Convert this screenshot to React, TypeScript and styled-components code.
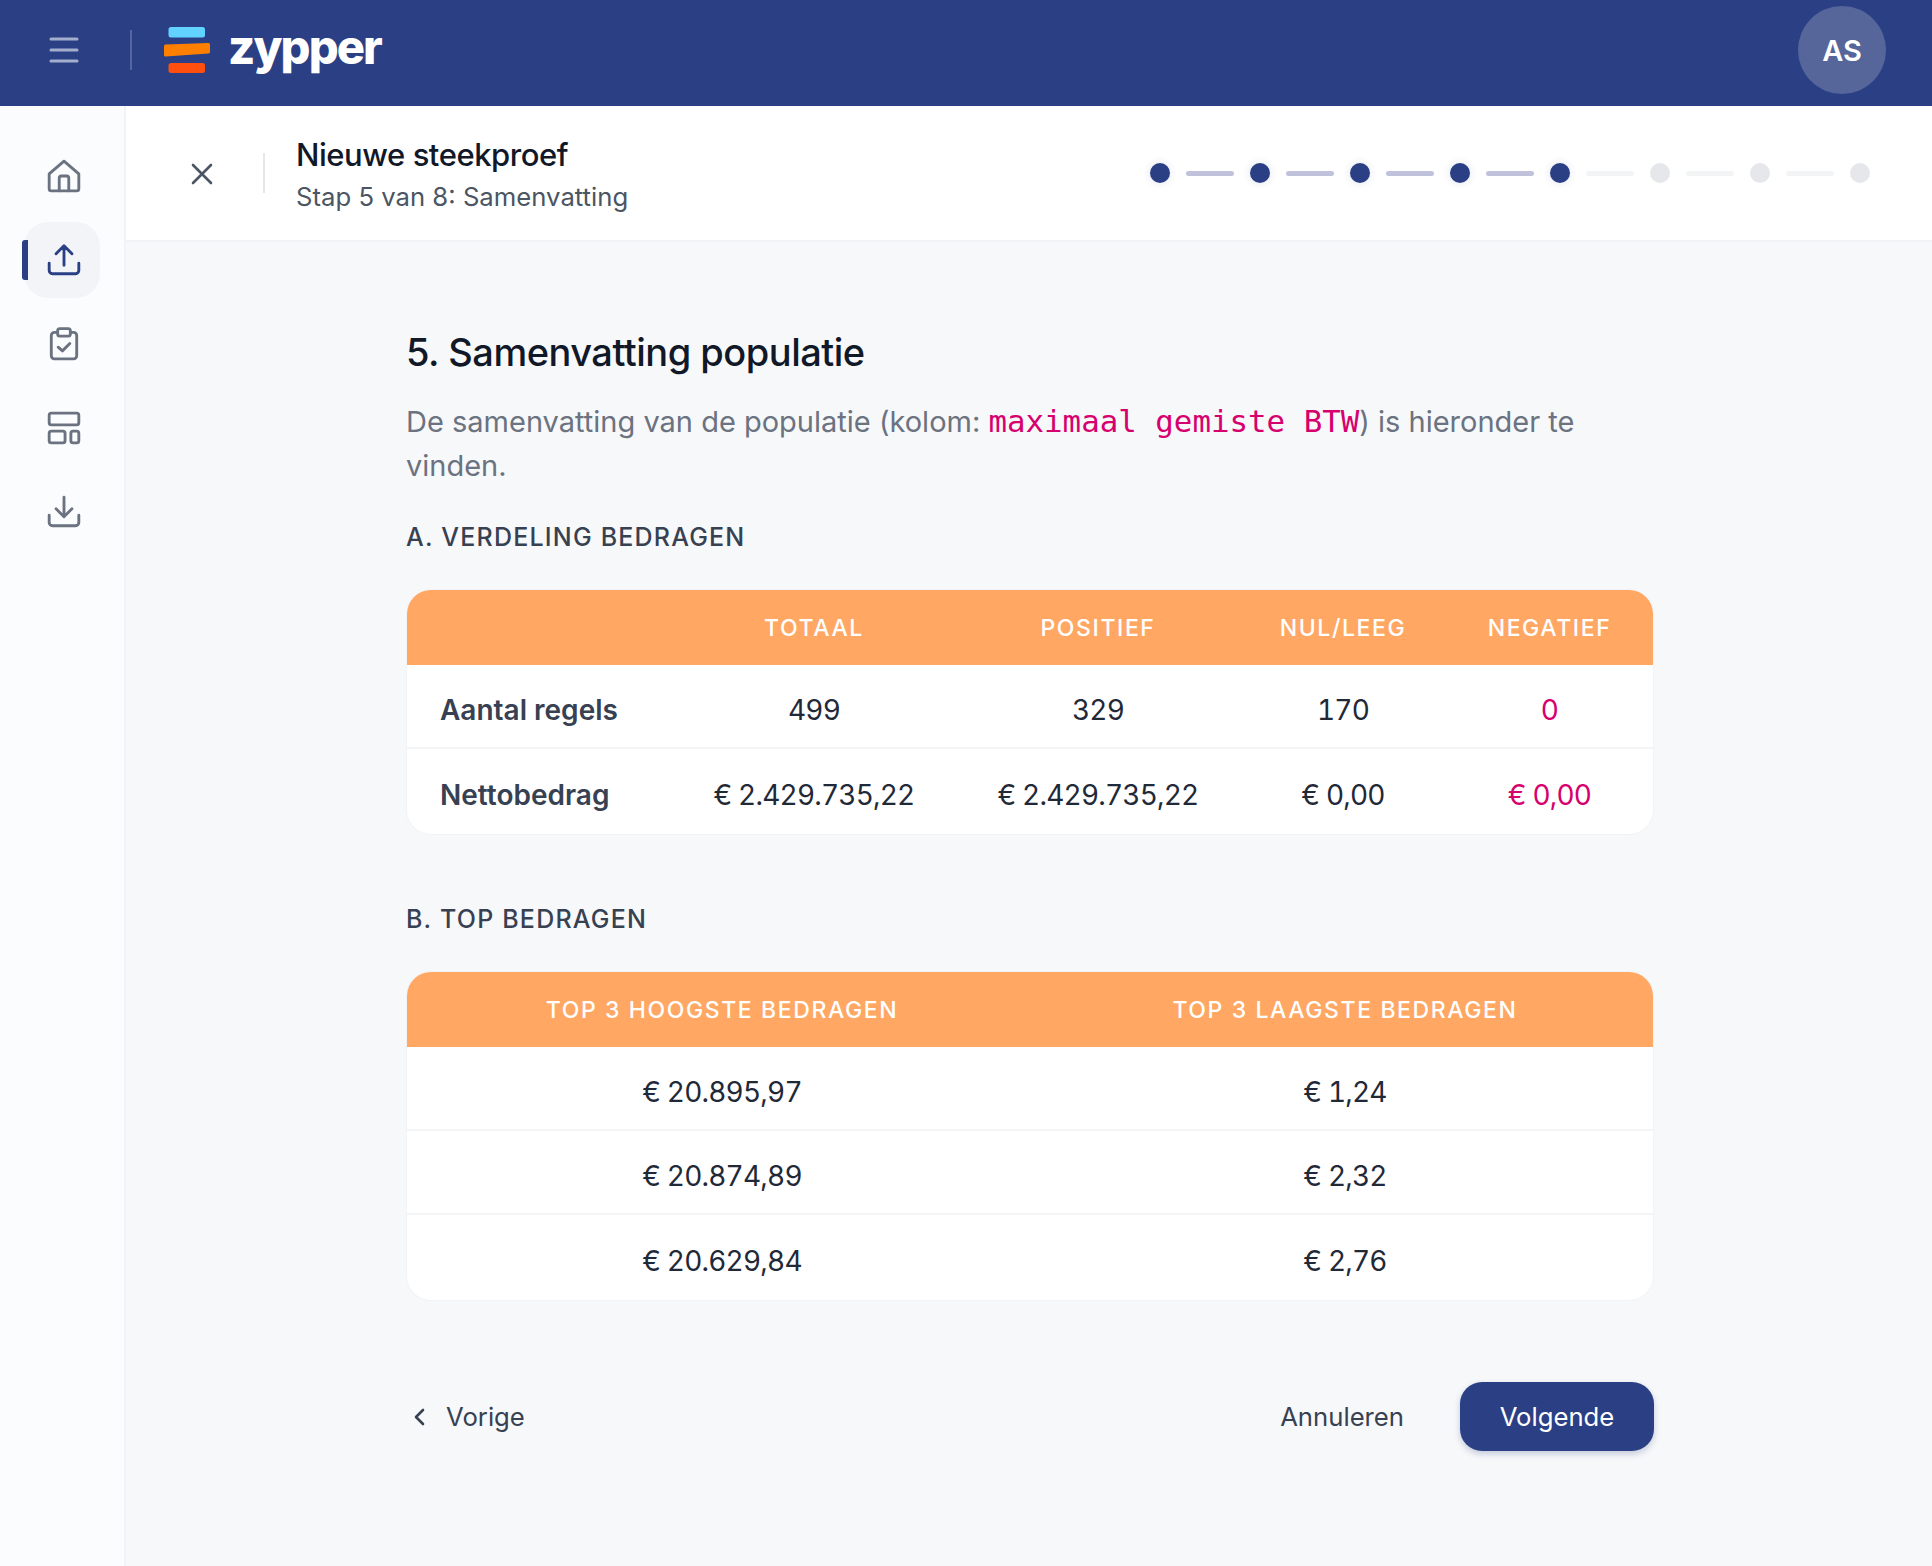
import React from 'react';
import styled, { createGlobalStyle } from 'styled-components';

const GlobalStyle = createGlobalStyle`
  html, body {
    margin: 0;
    padding: 0;
    height: 100%;
    background: #f7f8fa;
    font-family: Inter, "Noto Sans", sans-serif;
    color: #1f2937;
  }
  * { box-sizing: border-box; }
`;

const Page = styled.div`
  display: flex;
  flex-direction: column;
  height: 1566px;
  overflow: hidden;
`;

const Header = styled.header`
  flex: 0 0 106px;
  display: flex;
  align-items: center;
  background: #2b4084;
  padding: 0 46px 0 48px;
`;

const HeaderDivider = styled.div`
  width: 2px;
  height: 40px;
  margin: -6px 32px 0 50px;
  background: rgba(255, 255, 255, 0.2);
`;

const Menu = styled.div`
  display: flex;
  margin-top: -6px;
`;

const Logo = styled.div`
  display: flex;
  align-items: center;
  gap: 18px;
  margin-top: -6px;
`;

const LogoText = styled.span`
  font-size: 47px;
  line-height: 50px;
  font-weight: 800;
  letter-spacing: -1.9px;
  color: #fff;
  margin-top: -6px;
`;

const Avatar = styled.div`
  margin-left: auto;
  margin-top: -6px;
  width: 88px;
  height: 88px;
  border-radius: 50%;
  background: #56669a;
  color: #fff;
  display: flex;
  align-items: center;
  justify-content: center;
  font-size: 29px;
  font-weight: 600;
`;

const Body = styled.div`
  flex: 1;
  display: flex;
  min-height: 0;
`;

const Sidebar = styled.nav`
  flex: 0 0 126px;
  background: #fbfcfe;
  border-right: 2px solid #f1f3f6;
  display: flex;
  flex-direction: column;
  gap: 8px;
  padding: 32px 24px 0;
`;

const NavItem = styled.div<{ $active?: boolean }>`
  position: relative;
  width: 76px;
  height: 76px;
  padding-left: 4px;
  display: flex;
  align-items: center;
  justify-content: center;
  border-radius: 24px;
  color: ${p => (p.$active ? '#2b4084' : '#6b7280')};
  background: ${p => (p.$active ? '#f3f4f8' : 'transparent')};

  &::before {
    content: ${p => (p.$active ? '""' : 'none')};
    position: absolute;
    left: -2px;
    top: 18px;
    width: 6px;
    height: 40px;
    border-radius: 3px 0 0 3px;
    background: #2b4084;
  }
`;

const Main = styled.main`
  flex: 1;
  min-width: 0;
  display: flex;
  flex-direction: column;
`;

const SubHeader = styled.div`
  flex: 0 0 136px;
  display: flex;
  align-items: center;
  background: #fff;
  border-bottom: 2px solid #f1f3f6;
  padding: 0 62px 0 64px;
`;

const CloseButton = styled.div`
  display: flex;
  margin-top: 2px;
  color: #4b5563;
`;

const SubDivider = styled.div`
  width: 2px;
  height: 40px;
  margin: 0 31px 0 49px;
  background: #e5e7eb;
`;

const SubTitles = styled.div`
  display: flex;
  flex-direction: column;
  gap: 5px;
  margin-top: 5px;
`;

const SubTitle = styled.div`
  font-size: 31px;
  line-height: 38px;
  font-weight: 500;
  color: #111827;
  letter-spacing: -0.45px;
`;

const SubText = styled.div`
  font-size: 25.7px;
  line-height: 36px;
  color: #4b5563;
`;

const Stepper = styled.div`
  margin-left: auto;
  display: flex;
  align-items: center;
  gap: 16px;
`;

const Dot = styled.span<{ $done?: boolean }>`
  width: 20px;
  height: 20px;
  border-radius: 50%;
  background: ${p => (p.$done ? '#2b4084' : '#e5e7eb')};
  box-shadow: ${p => (p.$done ? '0 0 6px 2px rgba(43, 64, 132, 0.08)' : 'none')};
`;

const StepLine = styled.span<{ $done?: boolean }>`
  width: 48px;
  height: 5px;
  border-radius: 3px;
  background: ${p => (p.$done ? '#c0c2dc' : '#f3f4f6')};
`;

const Content = styled.div`
  width: 1246px;
  margin: 0 0 0 281px;
  padding-top: 82px;
`;

const Title = styled.h1`
  margin: 0 0 0 -1px;
  font-size: 38px;
  line-height: 56px;
  font-weight: 500;
  letter-spacing: -0.5px;
  color: #111827;
`;

const Description = styled.p`
  margin: 20px 0 0 -1px;
  font-size: 29px;
  line-height: 44px;
  color: #6b7280;
`;

const Code = styled.code`
  font-family: "DejaVu Sans Mono", "Liberation Mono", monospace;
  font-size: 30.8px;
  line-height: 1;
  color: #d6006e;
`;

const SectionTitle = styled.h2<{ $top: number }>`
  margin: ${p => p.$top}px 0 0 -1px;
  font-size: 25px;
  line-height: 36px;
  font-weight: 500;
  letter-spacing: 1.2px;
  color: #374151;
`;

const TableCard = styled.div<{ $columns: string }>`
  margin-top: 35px;
  display: grid;
  grid-template-columns: ${p => p.$columns};
  background: #fff;
  border-radius: 24px;
  overflow: hidden;
  box-shadow: 0 0 0 1px #f1f3f6;
`;

const HeadCell = styled.div`
  height: 75px;
  display: flex;
  align-items: center;
  justify-content: center;
  background: #ffa763;
  color: #fff;
  font-size: 23px;
  font-weight: 500;
  letter-spacing: 1.6px;
`;

const Cell = styled.div<{ $label?: boolean; $negative?: boolean; $last?: boolean }>`
  height: ${p => (p.$last ? '85px' : '84px')};
  display: flex;
  align-items: center;
  justify-content: ${p => (p.$label ? 'flex-start' : 'center')};
  padding: 7px 0 0 ${p => (p.$label ? '33px' : '0')};
  border-bottom: ${p => (p.$last ? 'none' : '2px solid #f3f4f6')};
  font-size: 28px;
  font-variant-numeric: ${p => (p.$label ? 'normal' : 'tabular-nums')};
  letter-spacing: ${p => (p.$label ? '0' : '-0.8px')};
  font-weight: ${p => (p.$label ? 600 : 400)};
  color: ${p => (p.$negative ? '#d6006e' : p.$label ? '#374151' : '#1f2937')};
`;

const Footer = styled.div`
  margin: 82px -1px 0 0;
  display: flex;
  align-items: center;
`;

const BackButton = styled.div`
  display: flex;
  align-items: center;
  gap: 19px;
  padding-left: 6px;
  font-size: 25.7px;
  color: #374151;
`;

const CancelButton = styled.div`
  margin-left: auto;
  font-size: 25.7px;
  color: #374151;
`;

const NextButton = styled.div`
  margin-left: 56px;
  width: 194px;
  height: 69px;
  display: flex;
  align-items: center;
  justify-content: center;
  border-radius: 22px;
  background: #2b4084;
  color: #fff;
  font-size: 25.7px;
  box-shadow: 0 3px 6px rgba(43, 64, 132, 0.25);
`;

const Icon: React.FC<{ children: React.ReactNode }> = ({ children }) => (
  <svg width={36} height={36} viewBox="0 0 34 34" fill="none" stroke="currentColor" strokeWidth={2.7} strokeLinecap="round" strokeLinejoin="round">
    {children}
  </svg>
);

const steps = [true, true, true, true, true, false, false, false];

const distribution = [
  { label: 'Aantal regels', values: ['499', '329', '170', '0'] },
  { label: 'Nettobedrag', values: ['€ 2.429.735,22', '€ 2.429.735,22', '€ 0,00', '€ 0,00'] },
];

const topAmounts = [
  ['€ 20.895,97', '€ 1,24'],
  ['€ 20.874,89', '€ 2,32'],
  ['€ 20.629,84', '€ 2,76'],
];

const App: React.FC = () => (
  <Page>
    <GlobalStyle />
    <Header>
      <Menu>
        <svg width="32" height="28" viewBox="0 0 32 28" fill="none" stroke="#a3aecd" strokeWidth="3" strokeLinecap="round">
          <path d="M3 3h26M3 14h26M3 25h26" />
        </svg>
      </Menu>
      <HeaderDivider />
      <Logo>
        <svg width="46" height="46" viewBox="0 0 46 46">
          <rect x="4.5" y="0" width="36.5" height="10.5" rx="2.5" fill="#62d2ff" />
          <path d="M1.5 17.5 44.5 16a1.5 1.5 0 0 1 1.5 1.5v7.5a1.5 1.5 0 0 1-1.4 1.5L1.5 29.5a1.5 1.5 0 0 1-1.5-1.5V19a1.5 1.5 0 0 1 1.5-1.5z" fill="#ff8000" />
          <rect x="4.5" y="36" width="36.5" height="10" rx="2.5" fill="#ff4f0f" />
        </svg>
        <LogoText>zypper</LogoText>
      </Logo>
      <Avatar>AS</Avatar>
    </Header>
    <Body>
      <Sidebar>
        <NavItem>
          <Icon>
            <path d="M3 15 17 3l14 12v14a2 2 0 0 1-2 2H5a2 2 0 0 1-2-2z" />
            <path d="M12.5 31V19a2 2 0 0 1 2-2h5a2 2 0 0 1 2 2v12" />
          </Icon>
        </NavItem>
        <NavItem $active>
          <Icon>
            <path d="M17 22V4M9.5 11 17 3.5l7.5 7.5" />
            <path d="M3 20v7a3 3 0 0 0 3 3h22a3 3 0 0 0 3-3v-7" />
          </Icon>
        </NavItem>
        <NavItem>
          <Icon>
            <path d="M11 6H8a3 3 0 0 0-3 3v19a3 3 0 0 0 3 3h18a3 3 0 0 0 3-3V9a3 3 0 0 0-3-3h-3" />
            <rect x="11" y="2.5" width="12" height="7" rx="2" />
            <path d="m11.5 20 4 3.5 7-7" />
          </Icon>
        </NavItem>
        <NavItem>
          <Icon>
            <rect x="3" y="3" width="28" height="11" rx="2" />
            <rect x="3" y="20" width="15" height="11" rx="2" />
            <rect x="23.5" y="20" width="7.5" height="11" rx="2" />
          </Icon>
        </NavItem>
        <NavItem>
          <Icon>
            <path d="M17 3v18M9.5 14l7.5 7.5 7.5-7.5" />
            <path d="M3 20v7a3 3 0 0 0 3 3h22a3 3 0 0 0 3-3v-7" />
          </Icon>
        </NavItem>
      </Sidebar>
      <Main>
        <SubHeader>
          <CloseButton>
            <svg width="24" height="24" viewBox="0 0 24 24" fill="none" stroke="currentColor" strokeWidth="2.6" strokeLinecap="round">
              <path d="M3 3l18 18M21 3 3 21" />
            </svg>
          </CloseButton>
          <SubDivider />
          <SubTitles>
            <SubTitle>Nieuwe steekproef</SubTitle>
            <SubText>Stap 5 van 8: Samenvatting</SubText>
          </SubTitles>
          <Stepper>
            {steps.map((done, i) => (
              <React.Fragment key={i}>
                {i > 0 && <StepLine $done={done} />}
                <Dot $done={done} />
              </React.Fragment>
            ))}
          </Stepper>
        </SubHeader>
        <Content>
          <Title>5. Samenvatting populatie</Title>
          <Description>
            De samenvatting van de populatie (kolom: <Code>maximaal gemiste BTW</Code>) is hieronder te vinden.
          </Description>
          <SectionTitle $top={31}>A. VERDELING BEDRAGEN</SectionTitle>
          <TableCard $columns="265px 284px 284px 206px 1fr">
            <HeadCell />
            <HeadCell>TOTAAL</HeadCell>
            <HeadCell>POSITIEF</HeadCell>
            <HeadCell>NUL/LEEG</HeadCell>
            <HeadCell>NEGATIEF</HeadCell>
            {distribution.map((row, r) => (
              <React.Fragment key={row.label}>
                <Cell $label $last={r === distribution.length - 1}>{row.label}</Cell>
                {row.values.map((value, c) => (
                  <Cell key={c} $negative={c === 3} $last={r === distribution.length - 1}>{value}</Cell>
                ))}
              </React.Fragment>
            ))}
          </TableCard>
          <SectionTitle $top={67}>B. TOP BEDRAGEN</SectionTitle>
          <TableCard $columns="630px 1fr">
            <HeadCell>TOP 3 HOOGSTE BEDRAGEN</HeadCell>
            <HeadCell>TOP 3 LAAGSTE BEDRAGEN</HeadCell>
            {topAmounts.map((row, r) => (
              <React.Fragment key={r}>
                {row.map((value, c) => (
                  <Cell key={c} $last={r === topAmounts.length - 1}>{value}</Cell>
                ))}
              </React.Fragment>
            ))}
          </TableCard>
          <Footer>
            <BackButton>
              <svg width="14" height="20" viewBox="0 0 14 20" fill="none" stroke="currentColor" strokeWidth="2.6" strokeLinecap="round" strokeLinejoin="round">
                <path d="M10 3 3 10l7 7" />
              </svg>
              Vorige
            </BackButton>
            <CancelButton>Annuleren</CancelButton>
            <NextButton>Volgende</NextButton>
          </Footer>
        </Content>
      </Main>
    </Body>
  </Page>
);

export default App;
